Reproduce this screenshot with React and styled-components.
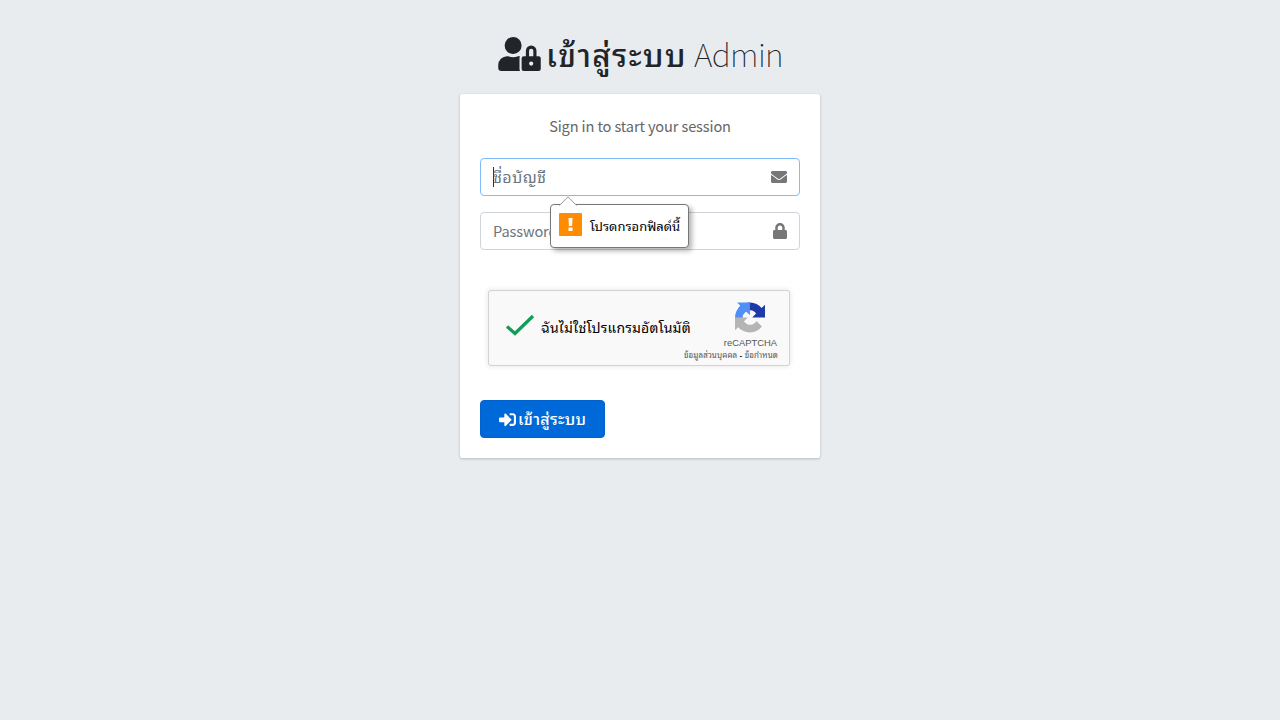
import React from 'react';
import styled, { createGlobalStyle } from 'styled-components';
import { FaUserLock, FaEnvelope, FaLock, FaSignInAlt } from 'react-icons/fa';

const thai = '"Noto Sans Thai Looped", Loma, Garuda, Waree, "Noto Sans Thai"';
const sans = `"Noto Sans CJK SC", ${thai}, sans-serif`;

const GlobalStyle = createGlobalStyle`
  * { box-sizing: border-box; }
  body {
    margin: 0;
    min-height: 100vh;
    background: #e8ecef;
    color: #212529;
    font-family: ${sans};
    overflow: hidden;
  }
`;

const Page = styled.main`
  display: flex;
  flex-direction: column;
  align-items: center;
  height: 100vh;
  background: #e8ecef;
`;

const Title = styled.h1`
  display: flex;
  align-items: center;
  width: 284px;
  height: 50px;
  margin: 30px 0 14px;
  padding-bottom: 3px;
  font-weight: 300;
  line-height: 50px;
  white-space: nowrap;
`;

const TitleIcon = styled(FaUserLock)`
  flex: none;
  width: 43px;
  height: 34px;
  margin: 1px 5px 0 0;
`;

const Text = styled.span`
  display: block;
  flex: none;
  width: ${(p) => (p.$width ? `${p.$width}px` : 'auto')};
  padding-bottom: ${(p) => p.$lift || 0}px;
  font-size: ${(p) => p.$size}px;
  font-weight: ${(p) => p.$weight || 400};
  letter-spacing: ${(p) => p.$track || 0}px;
  white-space: nowrap;
`;

const Card = styled.section`
  width: 360px;
  height: 364px;
  padding: 20px;
  background: #fff;
  border-radius: 2px;
  box-shadow: 0 0 1px rgba(0, 0, 0, 0.125), 0 1px 3px rgba(0, 0, 0, 0.2);
`;

const Message = styled.p`
  margin: 0;
  height: 44px;
  color: #666;
  font-size: 14.6px;
  letter-spacing: -0.13px;
  line-height: 23px;
  text-align: center;
`;

const Field = styled.div`
  position: relative;
  display: flex;
  align-items: center;
  justify-content: space-between;
  height: 38px;
  margin-bottom: 16px;
  padding: 0 ${(p) => (p.$focused ? 12 : 11)}px 0 12px;
  border: 1px solid ${(p) => (p.$focused ? '#80bdff' : '#ced4da')};
  border-radius: 4px;
  background: #fff;
  color: #777;
`;

const Caret = styled.span`
  width: 1px;
  height: 20px;
  margin-right: -1px;
  background: #333;
`;

const Placeholder = styled.div`
  display: flex;
  align-items: center;
  color: #6c757d;
`;

const Tooltip = styled.div`
  position: absolute;
  z-index: 2;
  top: 45px;
  left: 69px;
  display: flex;
  align-items: center;
  gap: 8px;
  width: 139px;
  height: 44px;
  padding: 0 0 4px 8px;
  border: 1px solid #777;
  border-radius: 4px;
  background: #fff;
  color: #000;
  box-shadow: 3px 3px 5px rgba(0, 0, 0, 0.3);
`;

const TooltipText = styled(Text)`
  padding-top: 3px;
`;

const TooltipArrow = styled.svg`
  position: absolute;
  top: -9px;
  left: 8px;
`;

const Warning = styled.svg`
  flex: none;
`;

const Captcha = styled.div`
  display: flex;
  justify-content: space-between;
  width: 302px;
  height: 76px;
  margin: 40px 0 34px 8px;
  border: 1px solid #d3d3d3;
  border-radius: 3px;
  background: #f9f9f9;
  color: #000;
  box-shadow: 0 0 4px 1px rgba(0, 0, 0, 0.08);
`;

const CaptchaCheck = styled.div`
  display: flex;
  align-items: center;
  padding-left: 16px;
  gap: 6px;
`;

const CheckMark = styled.svg`
  margin-bottom: 7px;
`;

const CaptchaBrand = styled.div`
  display: flex;
  flex-direction: column;
  align-items: flex-end;
  padding: 11px 11px 0 0;
  margin-left: -20px;
  font-family: "Liberation Sans", ${thai}, sans-serif;
  color: #555;
`;

const BrandMark = styled.svg`
  margin-right: 13px;
`;

const BrandName = styled.span`
  margin: 4px 1px 0 0;
  font-family: "Liberation Sans", sans-serif;
  font-size: 9.4px;
  line-height: 12px;
`;

const BrandLinks = styled.span`
  margin-top: 1px;
  font-size: 8px;
  letter-spacing: 0.1px;
  line-height: 12px;
  white-space: nowrap;
`;

const Dash = styled.span`
  color: #000;
  font-weight: 700;
`;

const Button = styled.button`
  display: flex;
  align-items: center;
  gap: 2px;
  width: 125px;
  height: 38px;
  padding: 0 0 0 18px;
  border: 1px solid #0062cc;
  border-radius: 4px;
  background: #0069d9;
  color: #fff;
  font-family: ${sans};
`;

export default function App() {
  return (
    <>
      <GlobalStyle />
      <Page>
        <Title>
          <TitleIcon />
          <Text $size={31.5} $weight={500} $width={148} $track={1.4} $lift={1}>เข้าสู่ระบบ</Text>
          <Text $size={32} $weight={100} $track={-0.65} $lift={1}>Admin</Text>
        </Title>
        <Card>
          <Message>Sign in to start your session</Message>
          <Field $focused>
            <Placeholder>
              <Caret />
              <Text $size={16} $track={0.35} $lift={2}>ชื่อบัญชี</Text>
            </Placeholder>
            <FaEnvelope size={16} />
            <Tooltip>
              <TooltipArrow width="18" height="10" viewBox="0 0 18 10">
                <path d="M0.5 9.5 L9 0.8 L17.5 9.5" fill="#fff" stroke="#999" />
                <path d="M1.5 9.5H16.5" stroke="#fff" />
              </TooltipArrow>
              <Warning width="23" height="23" viewBox="0 0 23 23">
                <rect width="23" height="23" rx="1" fill="#ff8c00" />
                <path d="M9.5 5h4l-.4 8h-3.2zM9.5 14.5h4v3.5h-4z" fill="#fff" />
              </Warning>
              <TooltipText $size={13}>โปรดกรอกฟิลด์นี้</TooltipText>
            </Tooltip>
          </Field>
          <Field>
            <Placeholder>
              <Text $size={14.6} $track={-0.13} $lift={2}>Password</Text>
            </Placeholder>
            <FaLock size={16} />
          </Field>
          <Captcha>
            <CaptchaCheck>
              <CheckMark width="30" height="24" viewBox="0 0 30 24" fill="none">
                <path d="M2 13.5 L10 20.5 L28 3" stroke="#0f9d58" strokeWidth="3.2" />
              </CheckMark>
              <Text $size={14} $track={0.18} $lift={3}>ฉันไม่ใช่โปรแกรมอัตโนมัติ</Text>
            </CaptchaCheck>
            <CaptchaBrand>
              <BrandMark width="30" height="31" viewBox="0 0 64 64">
                <path fill="#1c3aa9" d="M64 31.955l-.033-1.37V4.687l-7.16 7.16C50.948 4.674 42.033.093 32.05.093c-10.4 0-19.622 4.96-25.458 12.64l11.736 11.86a15.55 15.55 0 0 1 4.754-5.334c2.05-1.6 4.952-2.906 8.968-2.906.485 0 .86.057 1.135.163 4.976.393 9.288 3.14 11.828 7.124l-8.307 8.307L64 31.953" />
                <path fill="#4f8ff7" d="M31.862.094l-1.37.033H4.594l7.16 7.16C4.58 13.147 0 22.06 0 32.046c0 10.4 4.96 19.622 12.64 25.458L24.5 45.768a15.55 15.55 0 0 1-5.334-4.754c-1.6-2.05-2.906-4.952-2.906-8.968 0-.485.057-.86.163-1.135.393-4.976 3.14-9.288 7.124-11.828l8.307 8.307L31.86.095" />
                <path fill="#b5b5b5" d="M.001 32.045l.033 1.37v25.898l7.16-7.16c5.86 7.173 14.774 11.754 24.76 11.754 10.4 0 19.622-4.96 25.458-12.64l-11.736-11.86a15.55 15.55 0 0 1-4.754 5.334c-2.05 1.6-4.952 2.906-8.968 2.906-.485 0-.86-.057-1.135-.163-4.976-.393-9.288-3.14-11.828-7.124l8.307-8.307c-10.522.04-22.4.066-27.295-.005" />
              </BrandMark>
              <BrandName>reCAPTCHA</BrandName>
              <BrandLinks>ข้อมูลส่วนบุคคล <Dash>-</Dash> ข้อกำหนด</BrandLinks>
            </CaptchaBrand>
          </Captcha>
          <Button type="button">
            <FaSignInAlt size={17} />
            <Text $size={16} $weight={500} $track={0.3} $lift={2}>เข้าสู่ระบบ</Text>
          </Button>
        </Card>
      </Page>
    </>
  );
}
